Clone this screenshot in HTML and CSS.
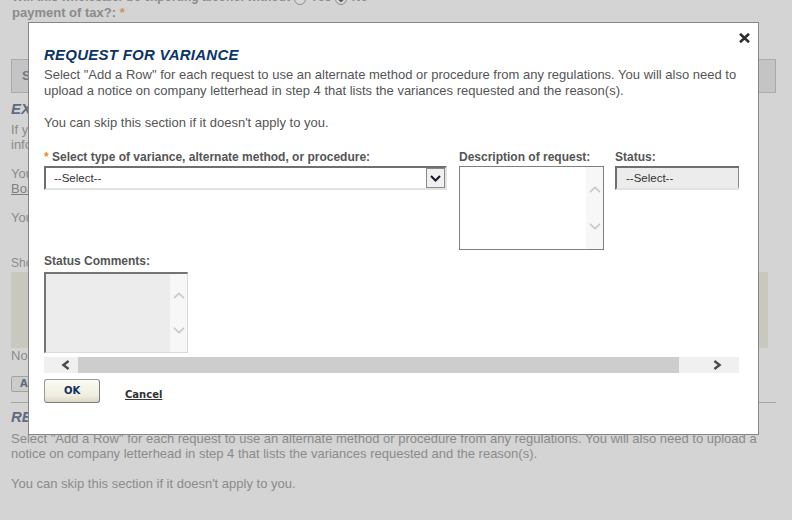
FILE: index.html
```html
<!DOCTYPE html>
<html lang="en">
<head>
<meta charset="utf-8">
<title>Request for Variance</title>
<link rel="stylesheet" href="styles.css">
</head>
<body>
<div class="page">
  <div class="q1">Will this wholesaler be exporting alcohol without <span class="radio"></span> Yes <span class="radio on"></span> No</div>
  <div class="q2">payment of tax?: <span class="req-muted">*</span></div>
  <div class="section-bar">Supporting Information</div>
  <h2 class="sec-title">EXPORT BOND</h2>
  <p class="txt mt4">If you will be exporting alcohol without payment of tax, you must have an export bond on file with the Board before<br>information about your bond can be accepted.</p>
  <p class="txt">You can find the bond form on the website of the<br><span class="lnk">Board of Alcohol Control</span></p>
  <p class="txt">You can skip this section if it doesn't apply to you.</p>
  <div class="show">Show records</div>
  <div class="grid-box"></div>
  <div class="norec">No records to display.</div>
  <button class="add-btn" type="button">Add a Row</button>
  <div class="rule"></div>
  <h2 class="sec-title mt5">REQUEST FOR VARIANCE</h2>
  <p class="txt mt5">Select "Add a Row" for each request to use an alternate method or procedure from any regulations. You will also need to upload a<br>notice on company letterhead in step 4 that lists the variances requested and the reason(s).</p>
  <p class="txt mt15">You can skip this section if it doesn't apply to you.</p>
</div>

<div class="dialog" role="dialog" aria-label="Request for variance">
  <button class="close" type="button" aria-label="Close">
    <svg width="11" height="10" viewBox="0 0 11 10"><path d="M1 0.8L10 9.2M10 0.8L1 9.2" fill="none" stroke="#2e2e2e" stroke-width="2.6"/></svg>
  </button>
  <h1 class="dlg-title">REQUEST FOR VARIANCE</h1>
  <p class="dlg-txt">Select "Add a Row" for each request to use an alternate method or procedure from any regulations. You will also need to<br>upload a notice on company letterhead in step 4 that lists the variances requested and the reason(s).</p>
  <p class="dlg-txt gap">You can skip this section if it doesn't apply to you.</p>

  <div class="scroller">
    <div class="row1">
      <div class="field f-type">
        <label class="lbl"><span class="req">*</span> Select type of variance, alternate method, or procedure:</label>
        <div class="select">
          <span class="sel-text">--Select--</span>
          <span class="sel-btn"><svg width="11" height="7" viewBox="0 0 11 7"><path d="M1 1l4.5 4.5L10 1" fill="none" stroke="#15182a" stroke-width="2"/></svg></span>
        </div>
      </div>
      <div class="field f-desc">
        <label class="lbl">Description of request:</label>
        <div class="textarea">
          <div class="ta-body"></div>
          <div class="vbar">
            <svg width="12" height="7" viewBox="0 0 12 7"><path d="M1 6.2L6 1.4l5 4.8" fill="none" stroke="#c8c8c8" stroke-width="1.6"/></svg>
            <svg width="12" height="7" viewBox="0 0 12 7"><path d="M1 0.8L6 5.6l5-4.8" fill="none" stroke="#c8c8c8" stroke-width="1.6"/></svg>
          </div>
        </div>
      </div>
      <div class="field f-status">
        <label class="lbl">Status:</label>
        <div class="select disabled">
          <span class="sel-text">--Select--</span>
          <span class="sel-btn"></span>
        </div>
      </div>
    </div>
    <div class="field f-comments">
      <label class="lbl">Status Comments:</label>
      <div class="textarea disabled">
        <div class="ta-body"></div>
        <div class="vbar vbar-c">
          <svg width="12" height="7" viewBox="0 0 12 7"><path d="M1 6.2L6 1.4l5 4.8" fill="none" stroke="#c8c8c8" stroke-width="1.6"/></svg>
          <svg width="12" height="7" viewBox="0 0 12 7"><path d="M1 0.8L6 5.6l5-4.8" fill="none" stroke="#c8c8c8" stroke-width="1.6"/></svg>
        </div>
      </div>
    </div>
    <div class="hbar">
      <span class="hbtn-left"><svg width="9" height="10" viewBox="0 0 9 10"><path d="M7.6 1L2.4 5l5.2 4" fill="none" stroke="#4b4b4b" stroke-width="2.4"/></svg></span>
      <span class="hthumb"></span>
      <span class="htrack"><svg width="9" height="10" viewBox="0 0 9 10"><path d="M1.4 1L6.6 5 1.4 9" fill="none" stroke="#4b4b4b" stroke-width="2.4"/></svg></span>
    </div>
  </div>

  <div class="actions">
    <button class="ok" type="button">OK</button>
    <a class="cancel" href="#">Cancel</a>
  </div>
</div>
</body>
</html>
```

FILE: styles.css
```css
* { box-sizing: border-box; }
html, body { margin: 0; padding: 0; }
body {
  width: 792px;
  height: 520px;
  overflow: hidden;
  position: relative;
  background: #d4d4d4;
  font-family: "Liberation Sans", Arial, sans-serif;
}

/* background page (behind modal) */
.page {
  margin-top: -10px;
  padding: 0 16px 0 11px;
  color: #8b8b8b;
}
.q1 {
  font-weight: bold;
  font-size: 12px;
  line-height: 14px;
  white-space: nowrap;
  padding-left: 1px;
}
.q2 {
  font-weight: bold;
  font-size: 13px;
  line-height: 15px;
  padding-left: 1px;
}
.req-muted { color: #c99564; }
.radio {
  display: inline-block;
  width: 12px;
  height: 12px;
  border: 1px solid #8d8d8d;
  border-radius: 50%;
  background: #d8d8d8;
  vertical-align: -4px;
  margin: 0 1px 0 1px;
}
.radio.on { background: radial-gradient(circle, #5d5d5d 0 2.5px, #d8d8d8 3px); }
.section-bar {
  margin-top: 39px;
  height: 34px;
  border: 1px solid #a9a9a9;
  background: #c4c4c4;
  line-height: 32px;
  padding-left: 10px;
  font-weight: bold;
  font-size: 13px;
  color: #6e7a89;
}
.sec-title {
  margin: 7px 0 0;
  font-size: 15px;
  line-height: 18px;
  font-style: italic;
  font-weight: bold;
  color: #5d6c81;
}
.txt {
  margin: 14px 0 0;
  font-size: 13px;
  line-height: 15px;
  white-space: nowrap;
}
.mt4 { margin-top: 4px; }
.mt5 { margin-top: 5px; }
.mt15 { margin-top: 15px; }
.lnk { text-decoration: underline; color: #7f7f7f; }
.show {
  margin-top: 31px;
  font-size: 12px;
  line-height: 14px;
}
.grid-box {
  margin-top: 2px;
  width: 757px;
  height: 76px;
  background: #c8c8bf;
}
.norec {
  font-size: 13px;
  line-height: 15px;
}
.add-btn {
  display: block;
  margin-top: 13px;
  height: 16px;
  padding: 0 8px;
  border: 1px solid #a2a2a2;
  border-radius: 2px;
  background: #cbcbc7;
  font-family: "DejaVu Sans", Verdana, sans-serif;
  font-weight: bold;
  font-size: 10px;
  line-height: 14px;
  color: #5b6a80;
}
.rule {
  margin-top: 10px;
  height: 1px;
  background: #a4a4a4;
}

/* modal dialog */
.dialog {
  position: absolute;
  left: 28px;
  top: 22px;
  width: 731px;
  height: 413px;
  background: #fff;
  border: 1px solid #868686;
  padding: 23px 15px 0;
  color: #555;
}
.close {
  position: absolute;
  top: 10px;
  right: 8px;
  width: 11px;
  height: 10px;
  padding: 0;
  border: 0;
  background: none;
  display: flex;
}
.dlg-title {
  margin: 0;
  font-size: 15px;
  line-height: 18px;
  font-style: italic;
  font-weight: bold;
  letter-spacing: 0.25px;
  color: #0b3468;
}
.dlg-txt {
  margin: 3px 0 0;
  font-size: 13px;
  line-height: 16px;
  white-space: nowrap;
}
.dlg-txt.gap { margin-top: 16px; }

.scroller {
  margin-top: 19px;
  width: 695px;
  overflow: hidden;
}
.row1 {
  display: flex;
  align-items: flex-start;
}
.field { flex-shrink: 0; }
.f-type { width: 403px; }
.f-desc { width: 145px; margin-left: 12px; }
.f-status { width: 144px; margin-left: 11px; }
.f-comments { margin-top: 4px; }
.lbl {
  display: block;
  margin-bottom: 2px;
  font-size: 12px;
  line-height: 14px;
  font-weight: bold;
  color: #555;
  white-space: nowrap;
}
.f-comments .lbl { margin-bottom: 4px; }
.req { color: #e8892b; }

.select {
  display: flex;
  align-items: stretch;
  height: 24px;
  border-style: solid;
  border-width: 2px;
  border-color: #6f6f6f #e2e2e2 #e2e2e2 #6f6f6f;
  background: #fff;
}
.select.disabled { background: #ececec; }
.sel-text {
  flex: 1;
  padding-left: 8px;
  font-size: 11.5px;
  line-height: 20px;
  color: #333;
}
.select.disabled .sel-text { padding-left: 9px; }
.sel-btn {
  width: 19px;
  border: 1px solid #8a8a8a;
  background: #f0f0f0;
  display: flex;
  align-items: center;
  justify-content: center;
}

.textarea {
  display: flex;
  height: 84px;
  border: 1px solid #7f7f7f;
  background: #fff;
}
.textarea.disabled {
  width: 144px;
  height: 81px;
  background: #ececec;
  border-style: solid;
  border-width: 2px 1px 1px 2px;
  border-color: #747474 #dadada #dadada #747474;
}
.ta-body { flex: 1; }
.vbar {
  width: 17px;
  background: #f7f7f7;
  display: flex;
  flex-direction: column;
  align-items: center;
  justify-content: space-between;
  padding: 19px 0 19px;
}
.vbar-c { padding: 18px 0 18px; }

.hbar {
  margin-top: 4px;
  height: 16px;
  display: flex;
  background: #f0f0f0;
}
.hbtn-left {
  width: 34px;
  padding-left: 17px;
  display: flex;
  align-items: center;
}
.hthumb {
  width: 601px;
  background: #cdcdcd;
}
.htrack {
  flex: 1;
  padding-left: 34px;
  display: flex;
  align-items: center;
}

.actions {
  margin-top: 6px;
  display: flex;
  align-items: flex-start;
}
.ok {
  width: 56px;
  height: 24px;
  padding: 0;
  border: 1px solid #9a9a9a;
  border-right-color: #7c7c7c;
  border-bottom-color: #7c7c7c;
  border-radius: 3px;
  background: linear-gradient(#fbfaf3, #f1eedf 70%, #dcd8c4);
  font-family: "DejaVu Sans", Verdana, sans-serif;
  font-weight: bold;
  font-size: 10px;
  line-height: 22px;
  color: #0c2f63;
}
.cancel {
  margin: 10px 0 0 25px;
  font-family: "DejaVu Sans", Verdana, sans-serif;
  font-weight: bold;
  font-size: 10px;
  line-height: 12px;
  color: #333;
  text-decoration: underline;
}
```
